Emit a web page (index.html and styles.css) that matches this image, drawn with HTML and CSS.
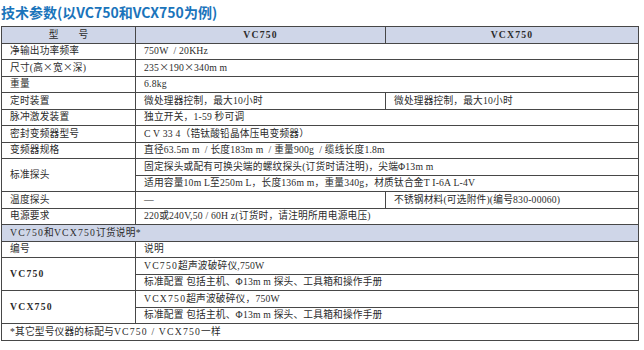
FILE: index.html
```html
<!DOCTYPE html>
<html lang="zh-CN">

<head>
    <meta charset="UTF-8">
    <title>技术参数</title>
    <link rel="stylesheet" href="styles.css">
</head>

<body>
    <h2 class="title">技术参数(以VC750和VCX750为例)</h2>

    <table class="spec-table">
        <colgroup>
            <col class="col-name">
            <col class="col-a">
            <col class="col-b">
        </colgroup>
        <tr class="head">
            <td class="center">型　　号</td>
            <td class="center latin">VC750</td>
            <td class="center latin">VCX750</td>
        </tr>
        <tr>
            <td>净输出功率频率</td>
            <td colspan="2">750W &nbsp;/ 20KHz</td>
        </tr>
        <tr>
            <td>尺寸(高<span class="cjk">×</span>宽<span class="cjk">×</span>深)</td>
            <td colspan="2">235<span class="cjk">×</span>190<span class="cjk">×</span>340m m</td>
        </tr>
        <tr>
            <td>重量</td>
            <td colspan="2">6.8kg</td>
        </tr>
        <tr>
            <td>定时装置</td>
            <td>微处理器控制，最大10小时</td>
            <td>微处理器控制，最大10小时</td>
        </tr>
        <tr>
            <td>脉冲激发装置</td>
            <td colspan="2">独立开关，1-59 秒可调</td>
        </tr>
        <tr>
            <td>密封变频器型号</td>
            <td colspan="2">C V 33 4（锆钛酸铅晶体压电变频器）</td>
        </tr>
        <tr>
            <td>变频器规格</td>
            <td colspan="2">直径63.5m m &nbsp;/ 长度183m m &nbsp;/ 重量900g &nbsp;/ 缆线长度1.8m</td>
        </tr>
        <tr>
            <td rowspan="2">标准探头</td>
            <td colspan="2">固定探头或配有可换尖端的螺纹探头(订货时请注明)，尖端Φ13m m</td>
        </tr>
        <tr>
            <td colspan="2">适用容量10m L至250m L，长度136m m，重量340g，材质钛合金T I-6A L-4V</td>
        </tr>
        <tr>
            <td>温度探头</td>
            <td>—</td>
            <td>不锈钢材料(可选附件)(编号830-00060)</td>
        </tr>
        <tr>
            <td>电源要求</td>
            <td colspan="2">220或240V,50 / 60H z(订货时，请注明所用电源电压)</td>
        </tr>
        <tr class="head">
            <td colspan="3"><span class="spaced">VC750</span>和<span class="spaced">VCX750</span>订货说明*</td>
        </tr>
        <tr>
            <td>编号</td>
            <td colspan="2">说明</td>
        </tr>
        <tr>
            <td rowspan="2" class="latin">VC750</td>
            <td colspan="2"><span class="spaced">VC750</span>超声波破碎仪,750W</td>
        </tr>
        <tr>
            <td colspan="2">标准配置 包括主机、Φ13m m 探头、工具箱和操作手册</td>
        </tr>
        <tr>
            <td rowspan="2" class="latin">VCX750</td>
            <td colspan="2"><span class="spaced">VCX750</span>超声波破碎仪，750W</td>
        </tr>
        <tr>
            <td colspan="2">标准配置 包括主机、Φ13m m 探头、工具箱和操作手册</td>
        </tr>
        <tr>
            <td colspan="3">*其它型号仪器的标配与<span class="spaced">VC750 / VCX750</span>一样</td>
        </tr>
    </table>
</body>

</html>
```

FILE: styles.css
```css
body {
    margin: 0;
    padding: 0 0 0 1px;
    background: #fff;
    font-family: 'Liberation Serif', 'Noto Sans CJK SC', serif;
    color: #2b2b2b;
}

.title {
    margin: 0;
    height: 26px;
    line-height: 24px;
    font-family: 'Noto Sans CJK SC', sans-serif;
    font-size: 14px;
    font-weight: bold;
    color: #1a74bb;
}

.spec-table {
    width: 638px;
    border-collapse: collapse;
    table-layout: fixed;
    font-size: 9.7px;
    letter-spacing: 0.2px;
}

.col-name {
    width: 134px;
}

.col-a {
    width: 250px;
}

.spec-table td {
    height: 16.5px;
    padding: 0 0 0 8px;
    border: 1px solid #474747;
    box-sizing: border-box;
    white-space: nowrap;
    vertical-align: middle;
    line-height: 14px;
}

.spec-table .head td {
    background: #cfd6e8;
}

.spec-table td.center {
    text-align: center;
    padding: 0;
}

.cjk {
    font-family: 'Noto Sans CJK SC', sans-serif;
}

.latin {
    letter-spacing: 1.2px;
    font-weight: bold;
}

.spaced {
    letter-spacing: 1.2px;
}
```
